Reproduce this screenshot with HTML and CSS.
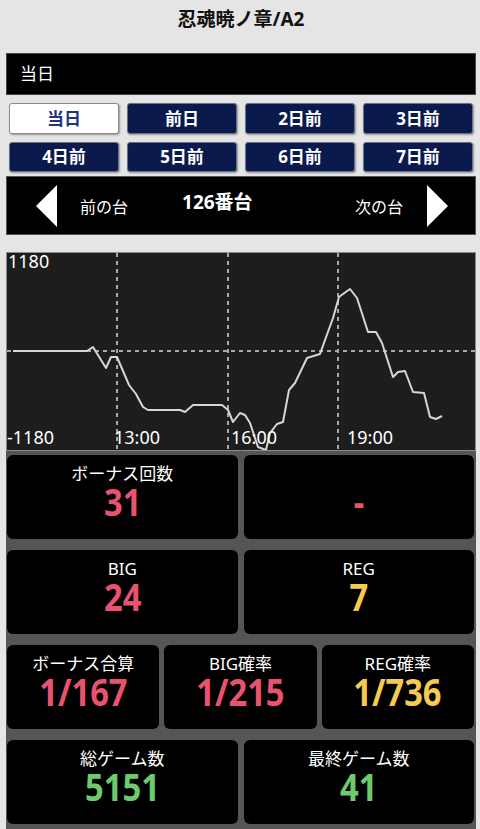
FILE: index.html
```html
<!DOCTYPE html>
<html lang="ja">
<head>
  <meta charset="UTF-8" />
  <title>忍魂暁ノ章/A2</title>
  <link rel="stylesheet" href="styles.css">
</head>
<body>
  <div class="page">
    <h1 class="title">忍魂暁ノ章/A2</h1>

    <div class="day-bar">当日</div>

    <div class="day-tabs">
      <button class="tab active">当日</button>
      <button class="tab">前日</button>
      <button class="tab">2日前</button>
      <button class="tab">3日前</button>
      <button class="tab">4日前</button>
      <button class="tab">5日前</button>
      <button class="tab">6日前</button>
      <button class="tab">7日前</button>
    </div>

    <div class="machine-nav">
      <a class="nav-link prev">
        <svg width="21" height="42" viewBox="0 0 21 42"><polygon points="21,0 21,42 0,21" fill="#fff"/></svg>
        <span>前の台</span>
      </a>
      <div class="machine-no">126番台</div>
      <a class="nav-link next">
        <span>次の台</span>
        <svg width="21" height="42" viewBox="0 0 21 42"><polygon points="0,0 0,42 21,21" fill="#fff"/></svg>
      </a>
    </div>

    <div class="graph">
      <svg width="468" height="197" viewBox="7 253 468 197">
        <g stroke="#a8a8a8" stroke-width="2" stroke-dasharray="4 4">
          <line x1="117" y1="253" x2="117" y2="450"/>
          <line x1="228" y1="253" x2="228" y2="450"/>
          <line x1="338" y1="253" x2="338" y2="450"/>
          <line x1="7" y1="351" x2="475" y2="351"/>
        </g>
        <polyline fill="none" stroke="#d6d6d6" stroke-width="2" stroke-linejoin="round"
          points="13,351 87,351 93,347 106,368 111,357 117,357 129,385 136,394 143,407 148,410 180,410 185,412 193,405 222,405 228,410 233,422 240,413 245,415 250,423 258,447 266,450 270,433 277,424 283,422 289,390 295,383 307,358 320,354 325,340 333,318 339,297 343,294 350,289 357,298 368,332 376,332 382,343 393,377 398,372 405,371 413,392 424,393 430,417 436,419 442,416"/>
        <g class="axis">
          <text x="8" y="268">1180</text>
          <text x="7" y="444">-1180</text>
          <text x="114" y="444">13:00</text>
          <text x="231" y="444">16:00</text>
          <text x="347" y="444">19:00</text>
        </g>
      </svg>
    </div>

    <div class="stats">
      <div class="stats-row">
        <div class="card">
          <div class="label">ボーナス回数</div>
          <div class="value pink">31</div>
        </div>
        <div class="card">
          <div class="label">&nbsp;</div>
          <div class="value pink">-</div>
        </div>
      </div>
      <div class="stats-row">
        <div class="card">
          <div class="label">BIG</div>
          <div class="value pink">24</div>
        </div>
        <div class="card">
          <div class="label">REG</div>
          <div class="value yellow">7</div>
        </div>
      </div>
      <div class="stats-row three">
        <div class="card">
          <div class="label">ボーナス合算</div>
          <div class="value pink">1/167</div>
        </div>
        <div class="card">
          <div class="label">BIG確率</div>
          <div class="value pink">1/215</div>
        </div>
        <div class="card">
          <div class="label">REG確率</div>
          <div class="value yellow">1/736</div>
        </div>
      </div>
      <div class="stats-row">
        <div class="card">
          <div class="label">総ゲーム数</div>
          <div class="value green">5151</div>
        </div>
        <div class="card">
          <div class="label">最終ゲーム数</div>
          <div class="value green">41</div>
        </div>
      </div>
    </div>
  </div>
</body>
</html>
```

FILE: styles.css
```css
body {
  margin: 0;
  background: #e5e5e5;
  font-family: "Noto Sans", "Noto Sans CJK JP", sans-serif;
  color: #fff;
}

.page {
  padding: 0 4px 0 6px;
}

.title {
  margin: 0;
  height: 53px;
  line-height: 38px;
  text-align: center;
  font-size: 19px;
  font-weight: bold;
  color: #111;
}

.day-bar {
  height: 42px;
  line-height: 40px;
  background: #000;
  border: 1px solid #444;
  box-sizing: border-box;
  padding-left: 13px;
  font-size: 17px;
}

.day-tabs {
  display: grid;
  grid-template-columns: repeat(4, 1fr);
  grid-template-rows: 31px 30px;
  gap: 8px 8px;
  margin: 8px 3px 0 3px;
}

.tab {
  background: #0a1a4c;
  color: #fff;
  border: 1px solid #6c7285;
  border-radius: 3px;
  box-shadow: 1px 1px 2px rgba(0, 0, 0, 0.35);
  font-family: "Noto Sans", "Noto Sans CJK JP", sans-serif;
  font-size: 17px;
  font-weight: bold;
  padding: 0 0 3px;
}

.tab.active {
  background: #fff;
  color: #1c3580;
  border-color: #8a8a8a;
}

.machine-nav {
  display: flex;
  align-items: center;
  height: 59px;
  margin-top: 4px;
  background: #000;
  border: 1px solid #555;
  box-sizing: border-box;
  padding: 0 27px 0 29px;
}

.nav-link {
  display: flex;
  align-items: center;
  gap: 23px;
  font-size: 16px;
}

.next {
  margin-left: auto;
  gap: 24px;
}

.machine-no {
  margin: 0 0 9px 54px;
  font-size: 19px;
  font-weight: bold;
}

.graph {
  margin-top: 17px;
  height: 199px;
  box-sizing: border-box;
  border: 1px solid #8a8a8a;
  background: #1d1d1d;
}

.graph svg {
  display: block;
}

.axis text {
  fill: #fff;
  font-family: "Noto Sans", sans-serif;
  font-size: 18px;
}

.stats {
  display: flex;
  flex-direction: column;
  gap: 11px;
  background: #555;
  padding: 4px 2px 5px 1px;
}

.stats-row {
  display: grid;
  grid-template-columns: repeat(2, 1fr);
  gap: 6px;
}

.stats-row.three {
  grid-template-columns: repeat(3, 1fr);
  gap: 5px;
}

.card {
  height: 84px;
  background: #000;
  border-radius: 6px;
  text-align: center;
  box-sizing: border-box;
  padding-top: 9px;
}

.label {
  font-size: 17px;
  line-height: 20px;
}

.value {
  display: inline-block;
  font-size: 38px;
  line-height: 35px;
  font-weight: bold;
  transform: scaleX(0.86);
}

.pink {
  color: #e8546f;
}

.yellow {
  color: #f3cb4d;
}

.green {
  color: #6dca6d;
}
```
